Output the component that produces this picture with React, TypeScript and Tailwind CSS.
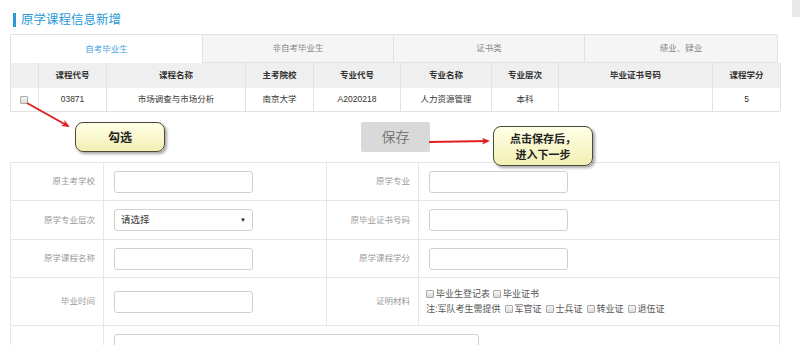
const tabs = ["自考毕业生", "非自考毕业生", "证书类", "绩业、肄业"];
const heads = ["", "课程代号", "课程名称", "主考院校", "专业代号", "专业名称", "专业层次", "毕业证书号码", "课程学分"];
const row = ["", "03871", "市场调查与市场分析", "南京大学", "A2020218", "人力资源管理", "本科", "", "5"];

function Box() {
  return <span className="inline-block w-[8px] h-[8px] border border-[#aaa] rounded-[1px] bg-gradient-to-b from-[#f4f4f4] to-[#dcdcdc] mr-[2px] align-[-1px]" />;
}

function Input() {
  return <div className="ml-[10px] w-[139px] h-[22px] border border-[#d0d0d0] rounded-[3px] bg-white" />;
}

function Label({ text }: { text: string }) {
  return (
    <div className="flex items-center justify-end pr-[8px] border-r border-[#e6e6e6] text-[8.5px] text-[#9a9a9a]">
      {text}
    </div>
  );
}

export default function App() {
  return (
    <div
      className="relative w-[800px] h-[345px] overflow-hidden bg-white text-[#333]"
      style={{ fontFamily: '"Liberation Sans", "Noto Sans CJK SC", sans-serif' }}
    >
      <div className="absolute top-0 right-0 w-[8px] h-[17px] bg-[#e8e8e8]" />

      {/* 标题 */}
      <div className="flex items-center h-[34px] pl-[13px] pt-[6px]">
        <span className="w-[3px] h-[14px] bg-[#2b9ad6]" />
        <span className="ml-[5px] text-[12.5px] text-[#2b9ad6] leading-none">原学课程信息新增</span>
      </div>

      {/* 选项卡 + 表格 */}
      <div className="ml-[10px] w-[770px]">
        <div className="grid grid-cols-[192px_191px_191px_193px] w-[767px] h-[29px] border-t border-l border-[#e2e2e2]">
          {tabs.map((t, i) => (
            <div
              key={t}
              className={
                "flex items-center justify-center border-r border-[#e2e2e2] text-[8.5px] " +
                (i === 0 ? "bg-white text-[#4aa3df]" : "bg-[#f5f5f5] text-[#888] border-b")
              }
            >
              {t}
            </div>
          ))}
        </div>
        <div className="grid grid-cols-[28px_68px_139px_68px_87px_91px_67px_154px_68px] h-[25px] bg-[#efefef] border-l border-[#e2e2e2]">
          {heads.map((h, i) => (
            <div key={i} className="flex items-center justify-center border-r border-[#e2e2e2] text-[8.5px] font-bold text-[#333]">
              {h}
            </div>
          ))}
        </div>
        <div className="grid grid-cols-[28px_68px_139px_68px_87px_91px_67px_154px_68px] h-[24px] border-l border-b border-[#e2e2e2]">
          {row.map((c, i) => (
            <div key={i} className="flex items-center justify-center border-r border-[#e2e2e2] text-[8.5px] text-[#333]">
              {i === 0 ? <Box /> : c}
            </div>
          ))}
        </div>
      </div>

      {/* 保存 */}
      <div className="h-[50px] pt-[10px] pl-[361px]">
        <div className="flex items-center justify-center w-[69px] h-[30px] bg-[#d9d9d9] rounded-[2px] text-[14px] text-[#7a7a7a]">
          保存
        </div>
      </div>

      {/* 表单 */}
      <div className="ml-[10px] w-[770px] border-t border-l border-r border-[#e6e6e6] text-[8.5px]">
        <div className="grid grid-cols-[93px_223px_92px_362px] h-[38px] border-b border-[#e6e6e6]">
          <Label text="原主考学校" />
          <div className="flex items-center border-r border-[#e6e6e6]"><Input /></div>
          <Label text="原学专业" />
          <div className="flex items-center"><Input /></div>
        </div>
        <div className="grid grid-cols-[93px_223px_92px_362px] h-[39px] border-b border-[#e6e6e6]">
          <Label text="原学专业层次" />
          <div className="flex items-center border-r border-[#e6e6e6]">
            <div className="ml-[10px] w-[139px] h-[22px] border border-[#d0d0d0] rounded-[3px] flex items-center justify-between px-[6px]">
              <span className="text-[9.5px] text-[#333]">请选择</span>
              <span className="text-[6px] text-[#222]">▼</span>
            </div>
          </div>
          <Label text="原毕业证书号码" />
          <div className="flex items-center"><Input /></div>
        </div>
        <div className="grid grid-cols-[93px_223px_92px_362px] h-[38px] border-b border-[#e6e6e6]">
          <Label text="原学课程名称" />
          <div className="flex items-center border-r border-[#e6e6e6]"><Input /></div>
          <Label text="原学课程学分" />
          <div className="flex items-center"><Input /></div>
        </div>
        <div className="grid grid-cols-[93px_223px_92px_362px] h-[48px] border-b border-[#e6e6e6]">
          <Label text="毕业时间" />
          <div className="flex items-center border-r border-[#e6e6e6]"><Input /></div>
          <Label text="证明材料" />
          <div className="flex flex-col justify-center gap-[6px] pl-[7px] text-[9px] text-[#555] leading-none">
            <div className="flex items-center gap-[3px]">
              <span><Box />毕业生登记表</span>
              <span><Box />毕业证书</span>
            </div>
            <div className="flex items-center gap-[4px]">
              <span>注:军队考生需提供</span>
              <span><Box />军官证</span>
              <span><Box />士兵证</span>
              <span><Box />转业证</span>
              <span><Box />退伍证</span>
            </div>
          </div>
        </div>
        <div className="grid grid-cols-[93px_677px] h-[30px]">
          <div className="border-r border-[#e6e6e6]" />
          <div className="pt-[8px]">
            <div className="ml-[10px] w-[365px] h-[30px] border border-[#d0d0d0] rounded-[3px]" />
          </div>
        </div>
      </div>

      {/* 标注 */}
      <div className="absolute left-[75px] top-[122px] w-[90px] h-[30px] flex items-center justify-center rounded-[8px] border-[1.5px] border-[#4a4a3a] bg-gradient-to-b from-[#ffffe6] to-[#f3efb4] shadow-[2px_2px_3px_rgba(0,0,0,0.35)] text-[12px] font-bold text-[#222]"
        style={{ fontFamily: '"Noto Sans CJK SC", sans-serif' }}>
        勾选
      </div>
      <div className="absolute left-[493px] top-[126px] w-[100px] h-[40px] flex flex-col items-center justify-center rounded-[8px] border-[1.5px] border-[#4a4a3a] bg-gradient-to-b from-[#ffffe6] to-[#f3efb4] shadow-[2px_2px_3px_rgba(0,0,0,0.35)] text-[11px] font-bold text-[#222] leading-[16px]"
        style={{ fontFamily: '"Noto Sans CJK SC", sans-serif' }}>
        <span className="block">点击保存后，</span>
        <span className="block">进入下一步</span>
      </div>
      <svg className="absolute left-0 top-0" width="800" height="345" viewBox="0 0 800 345">
        <defs>
          <marker id="ah" markerWidth="8" markerHeight="8" refX="6" refY="4" orient="auto" markerUnits="userSpaceOnUse">
            <path d="M0,0.5 L8,4 L0,7.5 L2,4 Z" fill="#e11f1f" />
          </marker>
        </defs>
        <line x1="27" y1="103" x2="68" y2="126" stroke="#e11f1f" strokeWidth="2" markerEnd="url(#ah)" />
        <line x1="429" y1="142" x2="488" y2="141" stroke="#e11f1f" strokeWidth="2" markerEnd="url(#ah)" />
      </svg>
    </div>
  );
}
